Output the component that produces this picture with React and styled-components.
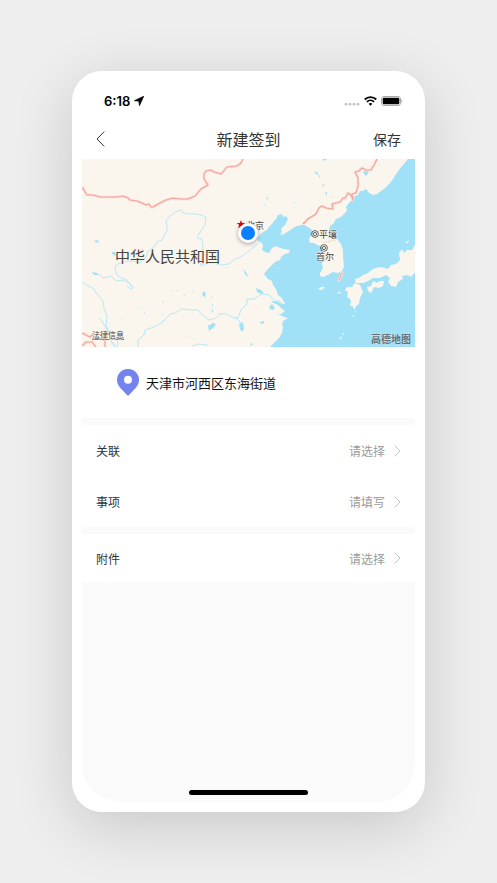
import React, { useState } from 'react';
import styled, { createGlobalStyle } from 'styled-components';

const ink = '#333333';
const muted = '#9b9b9b';
const screenGrey = '#fafafa';
const pinBlue = '#7583ee';
const land = '#faf5ed';
const sea = '#a1e1f8';
const border = '#f4a39b';

export default function App() {
  const [relation, setRelation] = useState('');
  const [item, setItem] = useState('');

  return (
    <>
      <GlobalStyle />
      <Page>
        <Phone>
          <Screen>
            <StatusBar>
              <Time>
                6:18 <LocationArrow />
              </Time>
              <Signals>
                <CellDots />
                <Wifi />
                <Battery />
              </Signals>
            </StatusBar>
            <NavBar>
              <BackButton aria-label="返回">
                <Chevron width="9" height="16" viewBox="0 0 9 16">
                  <path d="M8.2 .6 1 8l7.2 7.4" />
                </Chevron>
              </BackButton>
              <NavTitle>新建签到</NavTitle>
              <SaveButton>保存</SaveButton>
            </NavBar>
            <Map />
            <Address>
              <Pin />
              天津市河西区东海街道
            </Address>
            <Group>
              <Row>
                <Label htmlFor="relation">关联</Label>
                <Select
                  id="relation"
                  value={relation}
                  onChange={e => setRelation(e.target.value)}
                >
                  <option value="">请选择</option>
                </Select>
                <RowChevron />
              </Row>
              <Row>
                <Label htmlFor="item">事项</Label>
                <Input
                  id="item"
                  placeholder="请填写"
                  value={item}
                  onChange={e => setItem(e.target.value)}
                />
                <RowChevron />
              </Row>
            </Group>
            <Group>
              <Row $short>
                <Label htmlFor="attachment">附件</Label>
                <PickButton id="attachment">请选择</PickButton>
                <RowChevron />
              </Row>
            </Group>
            <Rest>
              <HomeIndicator />
            </Rest>
          </Screen>
        </Phone>
      </Page>
    </>
  );
}

function RowChevron() {
  return (
    <Chevron $light width="7" height="12" viewBox="0 0 7 12">
      <path d="M.6.6 6 6 .6 11.4" />
    </Chevron>
  );
}

function LocationArrow() {
  return (
    <svg width="10" height="10" viewBox="0 0 9 9">
      <path d="M8.7.3 4.9 8.6 4.4 4.6.4 4.2z" fill="#000" stroke="#000" strokeWidth=".7" strokeLinejoin="round" />
    </svg>
  );
}

function CellDots() {
  return (
    <svg width="16" height="10" viewBox="0 0 16 10">
      {[2, 6, 10, 14].map(x => (
        <circle key={x} cx={x} cy="8.2" r="1.4" fill="#c4c4c4" />
      ))}
    </svg>
  );
}

function Wifi() {
  return (
    <svg width="13" height="10" viewBox="0 0 13 10">
      <g fill="none" stroke="#000" strokeWidth="1.8">
        <path d="M.7 3.5a8.3 8.3 0 0 1 11.6 0" />
        <path d="M2.9 5.9a5.2 5.2 0 0 1 7.2 0" />
      </g>
      <path d="M4.6 7.8a2.8 2.8 0 0 1 3.8 0L6.5 9.8z" />
    </svg>
  );
}

function Battery() {
  return (
    <svg width="22" height="10" viewBox="0 0 22 10">
      <rect x=".5" y=".5" width="19" height="9" rx="2.5" fill="#fff" stroke="#aaa" />
      <rect x="1.7" y="1.7" width="16.6" height="6.6" rx="1.2" />
      <path d="M20.3 3.3c1.4.5 1.4 2.9 0 3.4z" fill="#aaa" />
    </svg>
  );
}

function Pin() {
  return (
    <svg width="22" height="27" viewBox="0 0 22 27">
      <path
        d="M11 0C4.9 0 0 4.8 0 10.8c0 3.3 1.3 5.8 3.3 8.1L11 27l7.7-8.1c2-2.3 3.3-4.8 3.3-8.1C22 4.8 17.1 0 11 0z"
        fill={pinBlue}
      />
      <circle cx="11" cy="10.7" r="4" fill="#fff" />
    </svg>
  );
}

function CityRing({ x, y }) {
  return (
    <g fill="none" stroke="#444" strokeWidth=".8">
      <circle cx={x} cy={y} r="3.4" />
      <circle cx={x} cy={y} r="1.6" />
    </g>
  );
}

function Map() {
  return (
    <MapSvg viewBox="0 0 333 188">
      <rect width="333" height="188" fill={land} />

      {/* sea */}
      <path
        fill={sea}
        d="M326 0 321 6 316 12 311 20 308 24 303 29 299 32 295 35 291 36 287 34 285 31 283 30 281 32 278 32 276 36 273 37 270 41 266 45 264 48 265 51 263 54 259 58 254 60 251 65 248 67 247 71 250 73 253 77 256 81 259 85 261 91 261 97 262 108 260 112 256 114 251 113 246 116 241 118 238 117 238 114 241 109 240 104 243 101 242 96 240 93 241 89 239 87 235 86 232 84 228 84 227 80 228 78 231 75 230 71 226 68 222 66 219 66 215 67 211 69 207 72 202 75 198 76 200 72 199 70 203 66 206 60 204 57 201 58 200 55 196 56 194 60 192 62 190 65 187 68 185 71 181 73 178 76 175 79 176 82 180 84 181 87 180 91 183 93 187 94 190 89 194 87 198 89 202 90 208 91 207 94 203 95 199 98 198 101 193 103 190 106 186 110 182 115 186 120 190 122 191 126 194 130 196 136 200 139 203 145 200 145 197 143 192 142 189 143 196 146 199 149 203 152 199 155 196 155 202 158 206 159 201 162 200 166 201 168 200 174 197 179 192 184 188 188H333V0z"
      />

      {/* japan and the islands */}
      <g fill={land}>
        <path d="M333 86 330 91 325 91 322 94 320 90 317 94 318 101 314 105 309 106 306 110 303 109 298 108 291 110 286 114 281 116 277 119 273 120 274 124 281 124 286 122 291 119 298 119 304 116 308 119 306 123 309 127 314 128 316 123 321 120 320 117 325 116 329 118 333 113z" />
        <path d="M263 131 265 128 270 128 273 124 278 126 281 133 278 139 277 145 274 147 273 150 271 149 271 147 268 147 269 141 265 138 266 133z" />
        <path d="M285 128 289 127 291 122 295 124 298 122 302 122 301 127 297 129 292 128 289 134 286 132z" />
        <path d="M236 130 239 128 243 128 240 131zM255 135l3-3 1 2zM270 157l2-1v2zM273 153l1-2v3zM257 179l3-2-1 3zM260 175l2-1v2zM323 84l4-3-1 3z" />
      </g>

      {/* lakes */}
      <g fill={sea}>
        <path d="M281 13 284 11 287 13 284 17 282 15zM187 148l3-3 3 4-2 2-3-1zM12 82l4-1 1 3-4-1zM30 93l3 0 1 4-4-2zM10 113l5 1 2 2-5 0zM161 110l3 3 2 4 1 2-4-4zM126 167l5-3 3 1-3 4-4 3zM157 165l4-2 1 7-2 3-2-3zM120 134l3-2 1 6-3-1zM178 163l4-1v2l-3 1zM174 129l5 2 3 3-3 1-4-2zM168 184l3 1-2 2zM240 0h5l-2 2z" />
        <path d="M232 12l3 1 2 3-3-1zM236 16l2 1v2zM240 26l2-1v3zM243 34l2-1v4zM250 38h2v1zM184 39l2-1v3zM182 45h1v2zM211 43h2v1zM88 131h2v1zM94 131h2v1zM101 136h2v1zM110 132h2v1zM60 149h1v1zM40 158h1v1zM62 153h1v2zM80 155h1v2zM80 142l2 1-1 1zM80 161h1v1zM103 177h1v1zM129 137h1v3zM130 145h1v3zM129 150l2 1v3zM137 154h1v2zM143 108h2v1z" />
      </g>

      {/* rivers */}
      <g fill="none" stroke="#b3e5f5" strokeWidth=".9" strokeLinejoin="round">
        <path d="M17 115l4 4 8-2 5 5 7-1 6 3 4 5-2 1-4-3M51 128l-6-7-5-2-5-3-2-6 1-4 7-3 9-1 8 2 7-7 0-4 7-5 3-5 5-2 3-5 2-5 0-4-1-5 4-5 5-4 6-2 2 3 6 1 7 0 5 1 5 2-1 8-6 9-2 4 5 1 1 8-1 10-2 9 5-2 8-1 7 2 9-1 6-5 6-2 9-7 9-7" />
        <path d="M0 123l6 4 5 2 4 6 6 7 1 7 3 9-1 8 4 9 1 6 6 8M18 159l5 8 4 7 2 9 4 5M36 188l-1-12M56 188l0-7 6-5 1-5 9-3 9-5 7-8 5-1 7-4 9 1 7 0 5 6 6 4 7-2 4-4 7 0 6 4 5 0 3-8 6-6 0-5 7 0 8-5 7 1 6 6 5 0 4 4" />
        <path d="M126 166l4 4 3-4M152 157l6 6 2 4M19 179l5 5M110 187l7-2 9 1" strokeWidth=".8" />
      </g>

      {/* national borders */}
      <g fill="none" strokeLinejoin="round">
        {[
          { stroke: '#fbdcd5', strokeWidth: 2.6 },
          { stroke: border, strokeWidth: 1.1 }
        ].map(line => (
          <g key={line.stroke} {...line}>
            <path d="M0 28 5 36 11 36 18 38 26 38 34 38 41 37 46 39 48 41 55 42 60 44 64 46 67 45 69 48 71 48 78 44 84 41 91 39 98 40 106 40 113 37 119 30 126 26 122 20 122 15 124 12 129 11 132 13 139 15 145 8 155 7 159 4 161 0" />
            <path d="M221 65 226 60 234 55 237 49 240 47 244 49 251 50 250 45 258 43 261 39 263 39 266 34 269 36 271 41 270 35 274 34 276 27 276 19 273 13 277 12 280 9 284 11 289 11 292 6 295 0" />
            <path d="M0 174 4 176 8 178 10 176 15 178 18 180 23 181 23 188M0 187l4-4 6 0 4 5" />
          </g>
        ))}
        <path d="M260 114 257 121" stroke="#fbdcd5" strokeWidth="3" strokeLinecap="round" />
        <path d="M260 114 257 121" stroke={border} />
        <path d="M242 83h5l3-2h4" stroke="#cfc4a8" strokeDasharray="1 1" />
      </g>

      <MapText x="33" y="103" $size={15}>中华人民共和国</MapText>
      <path d="m159 61 1.1 3 3.3.1-2.6 2 1 3.2-2.8-1.9-2.8 1.9 1-3.2-2.6-2 3.3-.1z" fill="#e60012" />
      <MapText x="164" y="70" $size={9}>北京</MapText>
      <CityRing x={233} y={75} />
      <MapText x="237" y="79" $size={9}>平壤</MapText>
      <CityRing x={242} y={89} />
      <MapText x="234" y="101" $size={9}>首尔</MapText>
      <a href="#legal">
        <MapText x="10" y="179" $size={8} textDecoration="underline">法律信息</MapText>
      </a>
      <MapText x="289" y="184" $size={10} $brand>高德地图</MapText>

      <Marker>
        <circle cx="166" cy="74" r="10" fill="#fff" />
        <circle cx="166" cy="74" r="7" fill="#0a7fff" />
      </Marker>
    </MapSvg>
  );
}

const GlobalStyle = createGlobalStyle`
  * {
    box-sizing: border-box;
  }

  body {
    margin: 0;
    background-color: #eeeeee;
    font-family: 'Noto Sans CJK SC', sans-serif;
    color: ${ink};
  }

  button,
  input,
  select {
    margin: 0;
    padding: 0;
    border: 0;
    background: none;
    color: inherit;
    font: inherit;
  }
`;

const Page = styled.div`
  min-height: 100vh;
  padding: 71px 72px;
  display: flex;
`;

const Phone = styled.main`
  flex: 1;
  min-width: 0;
  display: flex;
  padding: 10px;
  border-radius: 30px;
  background-color: white;
  box-shadow: 0px 14px 60px rgba(0, 0, 0, 0.16);
`;

const Screen = styled.div`
  flex: 1;
  min-width: 0;
  display: flex;
  flex-direction: column;
`;

const StatusBar = styled.div`
  height: 40px;
  padding: 0 12px 0 22px;
  display: flex;
  align-items: center;
  justify-content: space-between;
`;

const Time = styled.div`
  display: flex;
  align-items: center;
  gap: 4px;
  font-family: Inter, sans-serif;
  font-size: 13px;
  font-weight: 600;
  color: black;
`;

const Signals = styled.div`
  display: flex;
  align-items: center;
  gap: 4px;
`;

const NavBar = styled.header`
  height: 38px;
  padding: 0 14px 2px;
  display: grid;
  grid-template-columns: 1fr auto 1fr;
  align-items: center;
`;

const BackButton = styled.button`
  display: flex;
  justify-self: start;
  cursor: pointer;
`;

const NavTitle = styled.h1`
  margin: 0;
  font-size: 16px;
  line-height: 24px;
  font-weight: 400;
`;

const SaveButton = styled.button`
  justify-self: end;
  font-size: 14px;
  line-height: 24px;
  cursor: pointer;
`;

const Chevron = styled.svg`
  flex: none;
  fill: none;
  stroke: ${({ $light }) => ($light ? '#c4c4c4' : ink)};
  stroke-width: 1px;
`;

const MapSvg = styled.svg`
  display: block;
  width: 100%;
`;

const MapText = styled.text`
  font-size: ${({ $size }) => $size}px;
  font-weight: ${({ $brand }) => ($brand ? 700 : 400)};
  fill: ${({ $brand }) => ($brand ? '#667075' : '#444444')};
  stroke: ${({ $brand }) => ($brand ? '#c4e8f5' : land)};
  stroke-width: 1px;
  paint-order: stroke;
`;

const Marker = styled.g`
  filter: drop-shadow(0px 1px 2px rgba(0, 0, 0, 0.35));
`;

const Address = styled.div`
  height: 71px;
  padding: 0 35px;
  display: flex;
  align-items: center;
  gap: 7px;
  font-size: 13px;
  color: #111111;
`;

const Group = styled.section`
  border-top: 7px solid ${screenGrey};
`;

const Row = styled.div`
  height: ${({ $short }) => ($short ? 48 : 51)}px;
  padding: 0 14px;
  display: flex;
  align-items: center;
  gap: 9px;
`;

const Label = styled.label`
  font-size: 12px;
`;

const Select = styled.select`
  flex: 1;
  min-width: 0;
  appearance: none;
  font-size: 12px;
  text-align: right;
  text-align-last: right;
  color: ${muted};
`;

const Input = styled.input`
  flex: 1;
  min-width: 0;
  font-size: 12px;
  text-align: right;

  &::placeholder {
    color: ${muted};
  }
`;

const PickButton = styled.button`
  flex: 1;
  font-size: 12px;
  text-align: right;
  color: ${muted};
  cursor: pointer;
`;

const Rest = styled.div`
  flex: 1;
  min-height: 40px;
  padding-bottom: 7px;
  display: flex;
  align-items: flex-end;
  justify-content: center;
  border-radius: 0 0 38px 38px;
  background-color: ${screenGrey};
`;

const HomeIndicator = styled.div`
  width: 119px;
  height: 5px;
  border-radius: 3px;
  background-color: black;
`;
